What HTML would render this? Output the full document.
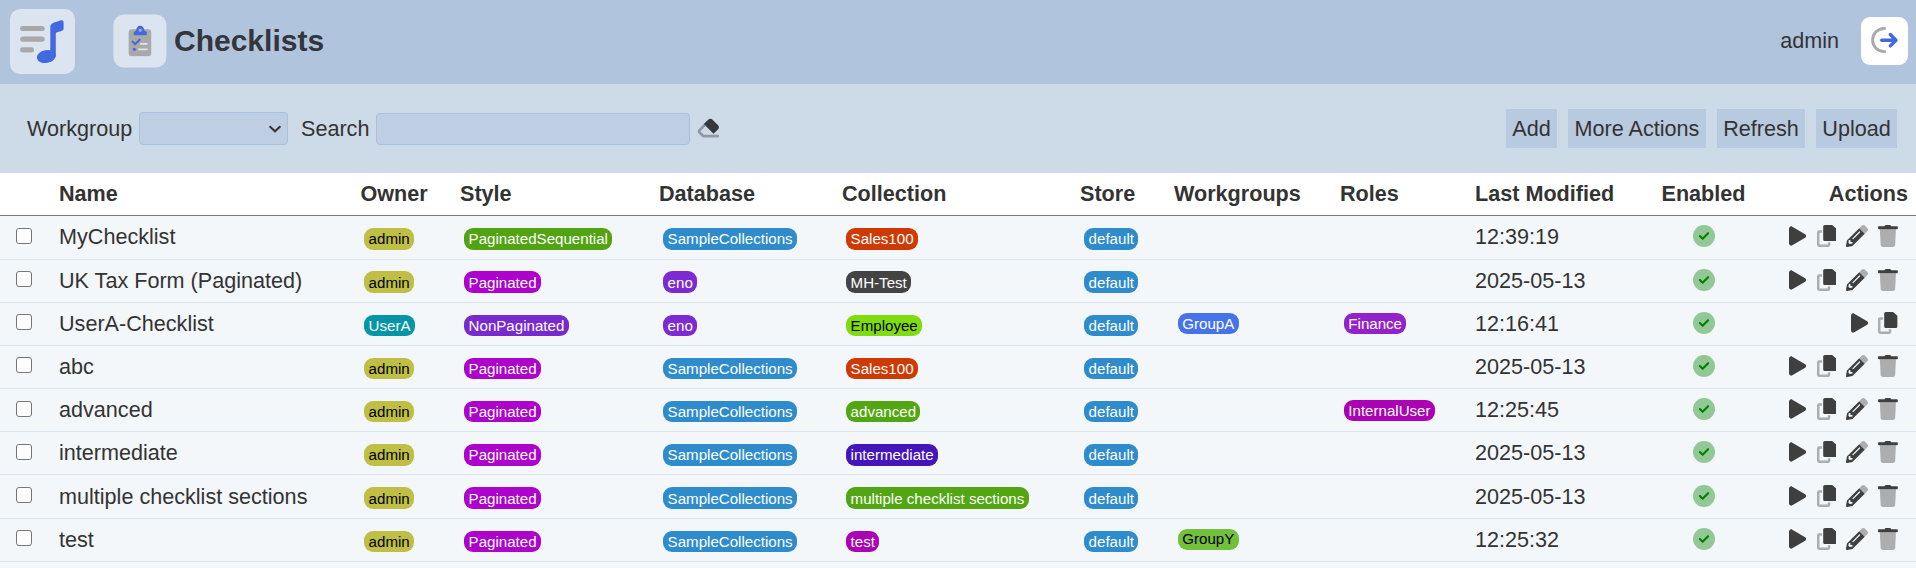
<!DOCTYPE html><html lang="en"><head><meta charset="utf-8"><title>Checklists</title><style>
*{box-sizing:border-box}
html,body{margin:0;padding:0}
body{width:1916px;height:568px;overflow:hidden;background:#f4f7fa;font-family:"Liberation Sans",sans-serif;font-size:21.6px;color:#333;position:relative}
.hdr{position:absolute;left:0;top:0;width:1916px;height:84px;background:#b0c4de}
.logo{position:absolute;left:10px;top:9px;width:65px;height:65px;border-radius:10px;background:#dbe4ef}
.pico{position:absolute;left:113px;top:14px;transform:translate(.4px,.5px);width:53px;height:53px;border-radius:10.500px;background:#dbe4ef}
.pico svg{position:absolute;left:15.400px;top:11.200px}
.title{position:absolute;left:174px;top:0;height:84px;line-height:82px;font-size:30px;font-weight:bold;color:#33363b;white-space:nowrap}
.user{position:absolute;right:77px;top:0;line-height:82px;font-size:21.6px;color:#333;white-space:nowrap}
.out{position:absolute;left:1861px;top:17px;width:47px;height:48px;border-radius:9px;background:#fff}
.out svg{position:absolute;left:0;top:0}
.tb{position:absolute;left:0;top:84px;width:1916px;height:89px;background:#cddae8}
.lbl{position:absolute;top:0;line-height:89px;white-space:nowrap;color:#333}
.sel{position:absolute;left:139px;top:28px;width:149px;height:33px;border:1px solid #a9c0de;border-radius:4px;background:#bfcfe3}
.inp{position:absolute;left:376px;top:29px;width:314px;height:32px;border:1px solid #a9c0de;border-radius:4px;background:#bfcfe3}
.btn{position:absolute;top:25px;height:39px;line-height:39px;background:#b8cae0;color:#333;padding:0;margin:0;border:0;border-radius:0;font:inherit;line-height:39px;text-align:center;white-space:nowrap;display:block;appearance:none;-webkit-appearance:none}
.th{position:absolute;left:0;top:173px;width:1916px;height:43px;background:#fff;border-bottom:1px solid #7a7a7a;font-weight:bold;color:#333}
.th span{position:absolute;top:0;line-height:42px;white-space:nowrap}
.ln{position:absolute;left:0;width:1916px;height:1px;background:#dbe4f0}
.c{position:absolute;line-height:42px;white-space:nowrap}
.cb{position:absolute;left:16px;width:16px;height:16px;border:1.500px solid #767676;border-radius:3px;background:#fff}
.bd{position:absolute;font-size:15.1px;line-height:22px;height:22px;padding:0 4.320px;border-radius:9px;white-space:nowrap}
.ic{height:22px;display:block;position:absolute}
.chk{position:absolute;left:1692.700px}
</style></head><body>
<div class="hdr"><div class="logo"><svg viewBox="0 0 65 65" width="65" height="65" style="display:block">
<g fill="none" stroke="#a9a9a9" stroke-width="5.2" stroke-linecap="round"><path d="M12.700 19.500H32.100M12.700 30.100H32.100M12.700 40.800H21.400"/></g>
<ellipse cx="36.400" cy="47.500" rx="9.600" ry="6.400" fill="#4169e1" transform="rotate(-10 36.400 47.500)"/>
<path fill="#4169e1" d="M40.300 47.500V18.100c0-2 1.300-3.700 3.200-4.300l7.600-2.500c1.300-.4 2.500.5 2.500 1.900v6.400c0 1-.6 1.800-1.500 2.100l-6.300 2.100V47.500z"/></svg></div><div class="pico"><svg viewBox="0 0 384 512" width="23.100" height="30.800" style="display:block">
<path fill="#a9a9a9" d="M56 64C25 64 0 89 0 120V456c0 31 25 56 56 56H328c31 0 56-25 56-56V120c0-31-25-56-56-56H56z"/>
<path fill="#4169e1" fill-rule="evenodd" d="M88 146V122C88 98 112 92 127 82C137 34 162 0 197 0C232 0 257 34 267 82C282 92 306 98 306 122V146A16 16 0 0 1 290 162H104A16 16 0 0 1 88 146ZM197 52a28 28 0 1 1 0 56 28 28 0 1 1 0-56z"/>
<path fill="none" stroke="#4169e1" stroke-width="34" stroke-linecap="round" stroke-linejoin="round" d="M70 268l40 42 78-74"/>
<circle cx="98" cy="396" r="26" fill="#4169e1"/>
<path fill="none" stroke="#dbe4ef" stroke-width="30" stroke-linecap="round" d="M206 306H308M172 396H308"/>
</svg></div><div class="title">Checklists</div><div class="user">admin</div><div class="out"><svg viewBox="0 0 48 48" width="48" height="48" style="display:block">
<path fill="none" stroke="#a9a9a9" stroke-width="2.900" stroke-linecap="round" d="M23.700 34.650h-.5a11.600 11.600 0 0 1 0-23.200h.5"/>
<path fill="none" stroke="#4169e1" stroke-width="3.400" stroke-linecap="round" stroke-linejoin="round" d="M20.700 23.200H34.800M29.300 17.500l5.700 5.700-5.700 5.700"/>
</svg></div></div>
<div class="tb"><span class="lbl" style="left:27px">Workgroup</span><div class="sel"><svg viewBox="-8 -8 16 16" width="16" height="16" style="position:absolute;left:127px;top:7.600px"><path d="M-5.400 -2.700L0 2.300L5.400 -2.700" fill="none" stroke="#333" stroke-width="2" stroke-linecap="butt" stroke-linejoin="miter"/></svg></div><span class="lbl" style="left:301px">Search</span><div class="inp"></div><div style="position:absolute;left:695.900px;top:32.900px"><svg viewBox="0 0 576 512" width="24.600" height="21.870" style="display:block"><path fill="#35383c" opacity=".4" d="M57.400 290.700c-25 25-25 65.500 0 90.500l80 80c12 12 28.300 18.700 45.300 18.700H512c17.700 0 32-14.300 32-32s-14.300-32-32-32H387.900l-90.500 0H182.600l-80-80L227.300 211.300 182 166 57.400 290.700z"/><path fill="#35383c" d="M290.700 57.400c25-25 65.500-25 90.500 0L518.600 194.700c25 25 25 65.500 0 90.500L410 394 182 166 290.700 57.400z"/></svg></div>
<button type="button" class="btn" style="left:1506px;width:51px">Add</button>
<button type="button" class="btn" style="left:1568px;width:138px">More Actions</button>
<button type="button" class="btn" style="left:1717px;width:88px">Refresh</button>
<button type="button" class="btn" style="left:1816px;width:81px">Upload</button>
</div>
<div class="th">
<span style="left:59px">Name</span>
<span style="left:360.5px">Owner</span>
<span style="left:460px">Style</span>
<span style="left:659px">Database</span>
<span style="left:842px">Collection</span>
<span style="left:1080px">Store</span>
<span style="left:1174px">Workgroups</span>
<span style="left:1340px">Roles</span>
<span style="left:1475px">Last Modified</span>
<span style="left:1661.5px">Enabled</span>
<span style="right:8px">Actions</span></div>
<div class="cb" style="top:228px"></div>
<span class="c" style="left:59px;top:216px">MyChecklist</span>
<span class="bd" style="left:364.3px;top:228.20px;height:21.4px;background:#bfbf45;color:#000"><span style="position:relative;top:0px">admin</span></span>
<span class="bd" style="left:464.3px;top:228.20px;height:21.4px;background:#52a312;color:#fff"><span style="position:relative;top:0px">PaginatedSequential</span></span>
<span class="bd" style="left:663.3px;top:228.20px;height:21.4px;background:#2e8ccc;color:#fff"><span style="position:relative;top:0px">SampleCollections</span></span>
<span class="bd" style="left:846.3px;top:228.20px;height:21.4px;background:#cf3a04;color:#fff"><span style="position:relative;top:0px">Sales100</span></span>
<span class="bd" style="left:1084.3px;top:228.20px;height:21.4px;background:#2e8ccc;color:#fff"><span style="position:relative;top:0px">default</span></span>


<span class="c" style="left:1475px;top:216px">12:39:19</span>
<div class="chk" style="top:224.8px"><svg viewBox="0 0 512 512" width="22" height="22" style="display:block"><path fill="#008000" opacity=".4" d="M256 512A256 256 0 1 0 256 0a256 256 0 1 0 0 512z"/><path fill="#008000" d="M369 209L241 337c-9.400 9.400-24.600 9.400-33.900 0l-64-64c-9.400-9.400-9.400-24.600 0-33.900s24.600-9.400 33.900 0l47 47L335 175c9.400-9.400 24.600-9.400 33.900 0s9.400 24.600 0 33.900z"/></svg></div>
<svg class="ic" viewBox="0 0 384 512" preserveAspectRatio="none" style="left:1789.1px;top:224.8px;width:17.2px"><path fill="#3f3f3f" d="M73 39c-14.800-9.100-33.400-9.400-48.500-.9S0 62.600 0 80V432c0 17.400 9.400 33.400 24.500 41.900s33.700 8.100 48.500-.9L361 297c14.300-8.700 23-24.200 23-41s-8.700-32.200-23-41L73 39z"/></svg>
<svg class="ic" viewBox="0 0 451 512" style="left:1816.65px;top:224.8px;width:19.38px"><path fill="#3f3f3f" opacity=".4" fill-rule="evenodd" d="M48 123H262a48 48 0 0 1 48 48V462a48 48 0 0 1-48 48H48a48 48 0 0 1-48-48V171a48 48 0 0 1 48-48zM58 181V452H252V181z"/><path fill="#f4f7fa" stroke="#f4f7fa" stroke-width="50" d="M180 0H353L451 86V339a36 36 0 0 1-36 36H180a36 36 0 0 1-36-36V36a36 36 0 0 1 36-36z"/><path fill="#3f3f3f" d="M180 0H345c5 0 10 2 13.500 5.500L445.500 81c3.500 3.500 5.500 8 5.500 13V339a36 36 0 0 1-36 36H180a36 36 0 0 1-36-36V36a36 36 0 0 1 36-36z"/></svg>
<svg class="ic" viewBox="0 0 512 512" style="left:1846px;top:224.8px;width:22px"><path fill="#3f3f3f" opacity=".4" d="M308 76L369.900 14.100c18.700-18.700 49.100-18.700 67.900 0l60.100 60.100c18.800 18.700 18.800 49.100 0 67.900L436 204z"/><path fill="#3f3f3f" fill-rule="evenodd" d="M308 76L21.600 362.400.4 483.900c-2.900 16.400 11.400 30.600 27.800 27.800l121.500-21.300L436 204zM152 326c-5.500-5.500-5.500-14.300 0-19.800l154-154c5.500-5.500 14.300-5.500 19.800 0s5.500 14.300 0 19.800l-154 154c-5.500 5.500-14.300 5.500-19.800 0zM103 396h48v36.300l-64.500 11.300-31.100-31.100L66.700 348H103v48z"/></svg>
<svg class="ic" viewBox="0 0 448 512" preserveAspectRatio="none" style="left:1878.1px;top:224.8px;width:19.8px"><path fill="#3f3f3f" opacity=".4" d="M406 96H42L60 467c1.600 25.300 22.600 45 47.900 45H340.100c25.300 0 46.300-19.700 47.900-45L406 96z"/><path fill="#3f3f3f" d="M0 49a20 20 0 0 1 20-20H149l5-11c5-10 15-17 27-17h86c12 0 22 7 27 17l5 11H428a20 20 0 0 1 20 20v27a20 20 0 0 1-20 20H20a20 20 0 0 1-20-20z"/></svg>
<div class="cb" style="top:271px"></div>
<span class="c" style="left:59px;top:260px">UK Tax Form (Paginated)</span>
<span class="bd" style="left:364.3px;top:271.40px;height:21.4px;background:#bfbf45;color:#000"><span style="position:relative;top:1px">admin</span></span>
<span class="bd" style="left:464.3px;top:271.40px;height:21.4px;background:#ac02cc;color:#fff"><span style="position:relative;top:1px">Paginated</span></span>
<span class="bd" style="left:663.3px;top:271.40px;height:21.4px;background:#7d2ad2;color:#fff"><span style="position:relative;top:1px">eno</span></span>
<span class="bd" style="left:846.3px;top:271.40px;height:21.4px;background:#444444;color:#fff"><span style="position:relative;top:1px">MH-Test</span></span>
<span class="bd" style="left:1084.3px;top:271.40px;height:21.4px;background:#2e8ccc;color:#fff"><span style="position:relative;top:1px">default</span></span>


<span class="c" style="left:1475px;top:260px">2025-05-13</span>
<div class="chk" style="top:268.8px"><svg viewBox="0 0 512 512" width="22" height="22" style="display:block"><path fill="#008000" opacity=".4" d="M256 512A256 256 0 1 0 256 0a256 256 0 1 0 0 512z"/><path fill="#008000" d="M369 209L241 337c-9.400 9.400-24.600 9.400-33.900 0l-64-64c-9.400-9.400-9.400-24.600 0-33.900s24.600-9.400 33.900 0l47 47L335 175c9.400-9.400 24.600-9.400 33.900 0s9.400 24.600 0 33.900z"/></svg></div>
<svg class="ic" viewBox="0 0 384 512" preserveAspectRatio="none" style="left:1789.1px;top:268.8px;width:17.2px"><path fill="#3f3f3f" d="M73 39c-14.800-9.100-33.400-9.400-48.500-.9S0 62.600 0 80V432c0 17.400 9.400 33.400 24.500 41.900s33.700 8.100 48.500-.9L361 297c14.300-8.700 23-24.200 23-41s-8.700-32.200-23-41L73 39z"/></svg>
<svg class="ic" viewBox="0 0 451 512" style="left:1816.65px;top:268.8px;width:19.38px"><path fill="#3f3f3f" opacity=".4" fill-rule="evenodd" d="M48 123H262a48 48 0 0 1 48 48V462a48 48 0 0 1-48 48H48a48 48 0 0 1-48-48V171a48 48 0 0 1 48-48zM58 181V452H252V181z"/><path fill="#f4f7fa" stroke="#f4f7fa" stroke-width="50" d="M180 0H353L451 86V339a36 36 0 0 1-36 36H180a36 36 0 0 1-36-36V36a36 36 0 0 1 36-36z"/><path fill="#3f3f3f" d="M180 0H345c5 0 10 2 13.500 5.500L445.500 81c3.500 3.500 5.500 8 5.500 13V339a36 36 0 0 1-36 36H180a36 36 0 0 1-36-36V36a36 36 0 0 1 36-36z"/></svg>
<svg class="ic" viewBox="0 0 512 512" style="left:1846px;top:268.8px;width:22px"><path fill="#3f3f3f" opacity=".4" d="M308 76L369.900 14.100c18.700-18.700 49.100-18.700 67.900 0l60.100 60.100c18.800 18.700 18.800 49.100 0 67.900L436 204z"/><path fill="#3f3f3f" fill-rule="evenodd" d="M308 76L21.600 362.400.4 483.900c-2.900 16.400 11.400 30.600 27.800 27.800l121.500-21.300L436 204zM152 326c-5.500-5.500-5.500-14.300 0-19.800l154-154c5.500-5.500 14.300-5.500 19.800 0s5.500 14.300 0 19.800l-154 154c-5.500 5.500-14.300 5.500-19.800 0zM103 396h48v36.300l-64.500 11.300-31.100-31.100L66.700 348H103v48z"/></svg>
<svg class="ic" viewBox="0 0 448 512" preserveAspectRatio="none" style="left:1878.1px;top:268.8px;width:19.8px"><path fill="#3f3f3f" opacity=".4" d="M406 96H42L60 467c1.600 25.300 22.600 45 47.900 45H340.100c25.300 0 46.300-19.700 47.900-45L406 96z"/><path fill="#3f3f3f" d="M0 49a20 20 0 0 1 20-20H149l5-11c5-10 15-17 27-17h86c12 0 22 7 27 17l5 11H428a20 20 0 0 1 20 20v27a20 20 0 0 1-20 20H20a20 20 0 0 1-20-20z"/></svg>
<div class="cb" style="top:314px"></div>
<span class="c" style="left:59px;top:303px">UserA-Checklist</span>
<span class="bd" style="left:364.3px;top:314.60px;height:21.4px;background:#0496a6;color:#fff"><span style="position:relative;top:0px">UserA</span></span>
<span class="bd" style="left:464.3px;top:314.60px;height:21.4px;background:#782ace;color:#fff"><span style="position:relative;top:0px">NonPaginated</span></span>
<span class="bd" style="left:663.3px;top:314.60px;height:21.4px;background:#7d2ad2;color:#fff"><span style="position:relative;top:0px">eno</span></span>
<span class="bd" style="left:846.3px;top:314.60px;height:21.4px;background:#7fdc10;color:#000"><span style="position:relative;top:0px">Employee</span></span>
<span class="bd" style="left:1084.3px;top:314.60px;height:21.4px;background:#2e8ccc;color:#fff"><span style="position:relative;top:0px">default</span></span>
<span class="bd" style="left:1178.0px;top:313.30px;height:21.06px;background:#4672ea;color:#fff"><span style="position:relative;top:0px">GroupA</span></span>
<span class="bd" style="left:1344.0px;top:313.30px;height:21.06px;background:#9422c9;color:#fff"><span style="position:relative;top:0px">Finance</span></span>
<span class="c" style="left:1475px;top:303px">12:16:41</span>
<div class="chk" style="top:311.8px"><svg viewBox="0 0 512 512" width="22" height="22" style="display:block"><path fill="#008000" opacity=".4" d="M256 512A256 256 0 1 0 256 0a256 256 0 1 0 0 512z"/><path fill="#008000" d="M369 209L241 337c-9.400 9.400-24.600 9.400-33.900 0l-64-64c-9.400-9.400-9.400-24.600 0-33.900s24.600-9.400 33.900 0l47 47L335 175c9.400-9.400 24.600-9.400 33.900 0s9.400 24.600 0 33.900z"/></svg></div>
<svg class="ic" viewBox="0 0 384 512" preserveAspectRatio="none" style="left:1850.8px;top:311.8px;width:17.2px"><path fill="#3f3f3f" d="M73 39c-14.800-9.100-33.400-9.400-48.500-.9S0 62.600 0 80V432c0 17.400 9.400 33.400 24.500 41.900s33.700 8.100 48.500-.9L361 297c14.300-8.700 23-24.200 23-41s-8.700-32.200-23-41L73 39z"/></svg>
<svg class="ic" viewBox="0 0 451 512" style="left:1878.3px;top:311.8px;width:19.38px"><path fill="#3f3f3f" opacity=".4" fill-rule="evenodd" d="M48 123H262a48 48 0 0 1 48 48V462a48 48 0 0 1-48 48H48a48 48 0 0 1-48-48V171a48 48 0 0 1 48-48zM58 181V452H252V181z"/><path fill="#f4f7fa" stroke="#f4f7fa" stroke-width="50" d="M180 0H353L451 86V339a36 36 0 0 1-36 36H180a36 36 0 0 1-36-36V36a36 36 0 0 1 36-36z"/><path fill="#3f3f3f" d="M180 0H345c5 0 10 2 13.500 5.500L445.500 81c3.500 3.500 5.500 8 5.500 13V339a36 36 0 0 1-36 36H180a36 36 0 0 1-36-36V36a36 36 0 0 1 36-36z"/></svg>
<div class="cb" style="top:357px"></div>
<span class="c" style="left:59px;top:346px">abc</span>
<span class="bd" style="left:364.3px;top:357.80px;height:21.4px;background:#bfbf45;color:#000"><span style="position:relative;top:0px">admin</span></span>
<span class="bd" style="left:464.3px;top:357.80px;height:21.4px;background:#ac02cc;color:#fff"><span style="position:relative;top:0px">Paginated</span></span>
<span class="bd" style="left:663.3px;top:357.80px;height:21.4px;background:#2e8ccc;color:#fff"><span style="position:relative;top:0px">SampleCollections</span></span>
<span class="bd" style="left:846.3px;top:357.80px;height:21.4px;background:#cf3a04;color:#fff"><span style="position:relative;top:0px">Sales100</span></span>
<span class="bd" style="left:1084.3px;top:357.80px;height:21.4px;background:#2e8ccc;color:#fff"><span style="position:relative;top:0px">default</span></span>


<span class="c" style="left:1475px;top:346px">2025-05-13</span>
<div class="chk" style="top:354.8px"><svg viewBox="0 0 512 512" width="22" height="22" style="display:block"><path fill="#008000" opacity=".4" d="M256 512A256 256 0 1 0 256 0a256 256 0 1 0 0 512z"/><path fill="#008000" d="M369 209L241 337c-9.400 9.400-24.600 9.400-33.900 0l-64-64c-9.400-9.400-9.400-24.600 0-33.900s24.600-9.400 33.900 0l47 47L335 175c9.400-9.400 24.600-9.400 33.900 0s9.400 24.600 0 33.900z"/></svg></div>
<svg class="ic" viewBox="0 0 384 512" preserveAspectRatio="none" style="left:1789.1px;top:354.8px;width:17.2px"><path fill="#3f3f3f" d="M73 39c-14.800-9.100-33.400-9.400-48.500-.9S0 62.600 0 80V432c0 17.400 9.400 33.400 24.500 41.900s33.700 8.100 48.500-.9L361 297c14.300-8.700 23-24.200 23-41s-8.700-32.200-23-41L73 39z"/></svg>
<svg class="ic" viewBox="0 0 451 512" style="left:1816.65px;top:354.8px;width:19.38px"><path fill="#3f3f3f" opacity=".4" fill-rule="evenodd" d="M48 123H262a48 48 0 0 1 48 48V462a48 48 0 0 1-48 48H48a48 48 0 0 1-48-48V171a48 48 0 0 1 48-48zM58 181V452H252V181z"/><path fill="#f4f7fa" stroke="#f4f7fa" stroke-width="50" d="M180 0H353L451 86V339a36 36 0 0 1-36 36H180a36 36 0 0 1-36-36V36a36 36 0 0 1 36-36z"/><path fill="#3f3f3f" d="M180 0H345c5 0 10 2 13.500 5.500L445.500 81c3.500 3.500 5.500 8 5.500 13V339a36 36 0 0 1-36 36H180a36 36 0 0 1-36-36V36a36 36 0 0 1 36-36z"/></svg>
<svg class="ic" viewBox="0 0 512 512" style="left:1846px;top:354.8px;width:22px"><path fill="#3f3f3f" opacity=".4" d="M308 76L369.900 14.100c18.700-18.700 49.100-18.700 67.900 0l60.100 60.100c18.800 18.700 18.800 49.100 0 67.900L436 204z"/><path fill="#3f3f3f" fill-rule="evenodd" d="M308 76L21.600 362.400.4 483.900c-2.900 16.400 11.400 30.600 27.800 27.800l121.500-21.300L436 204zM152 326c-5.500-5.500-5.500-14.300 0-19.800l154-154c5.500-5.500 14.300-5.500 19.800 0s5.500 14.300 0 19.800l-154 154c-5.500 5.500-14.300 5.500-19.800 0zM103 396h48v36.300l-64.500 11.300-31.100-31.100L66.700 348H103v48z"/></svg>
<svg class="ic" viewBox="0 0 448 512" preserveAspectRatio="none" style="left:1878.1px;top:354.8px;width:19.8px"><path fill="#3f3f3f" opacity=".4" d="M406 96H42L60 467c1.600 25.300 22.600 45 47.900 45H340.100c25.300 0 46.300-19.700 47.900-45L406 96z"/><path fill="#3f3f3f" d="M0 49a20 20 0 0 1 20-20H149l5-11c5-10 15-17 27-17h86c12 0 22 7 27 17l5 11H428a20 20 0 0 1 20 20v27a20 20 0 0 1-20 20H20a20 20 0 0 1-20-20z"/></svg>
<div class="cb" style="top:401px"></div>
<span class="c" style="left:59px;top:389px">advanced</span>
<span class="bd" style="left:364.3px;top:401.00px;height:21.4px;background:#bfbf45;color:#000"><span style="position:relative;top:0px">admin</span></span>
<span class="bd" style="left:464.3px;top:401.00px;height:21.4px;background:#ac02cc;color:#fff"><span style="position:relative;top:0px">Paginated</span></span>
<span class="bd" style="left:663.3px;top:401.00px;height:21.4px;background:#2e8ccc;color:#fff"><span style="position:relative;top:0px">SampleCollections</span></span>
<span class="bd" style="left:846.3px;top:401.00px;height:21.4px;background:#52a612;color:#fff"><span style="position:relative;top:0px">advanced</span></span>
<span class="bd" style="left:1084.3px;top:401.00px;height:21.4px;background:#2e8ccc;color:#fff"><span style="position:relative;top:0px">default</span></span>

<span class="bd" style="left:1344.0px;top:399.70px;height:21.06px;background:#ab02b3;color:#fff"><span style="position:relative;top:0px">InternalUser</span></span>
<span class="c" style="left:1475px;top:389px">12:25:45</span>
<div class="chk" style="top:397.8px"><svg viewBox="0 0 512 512" width="22" height="22" style="display:block"><path fill="#008000" opacity=".4" d="M256 512A256 256 0 1 0 256 0a256 256 0 1 0 0 512z"/><path fill="#008000" d="M369 209L241 337c-9.400 9.400-24.600 9.400-33.900 0l-64-64c-9.400-9.400-9.400-24.600 0-33.900s24.600-9.400 33.900 0l47 47L335 175c9.400-9.400 24.600-9.400 33.900 0s9.400 24.600 0 33.900z"/></svg></div>
<svg class="ic" viewBox="0 0 384 512" preserveAspectRatio="none" style="left:1789.1px;top:397.8px;width:17.2px"><path fill="#3f3f3f" d="M73 39c-14.800-9.100-33.400-9.400-48.500-.9S0 62.600 0 80V432c0 17.400 9.400 33.400 24.500 41.900s33.700 8.100 48.500-.9L361 297c14.300-8.700 23-24.200 23-41s-8.700-32.200-23-41L73 39z"/></svg>
<svg class="ic" viewBox="0 0 451 512" style="left:1816.65px;top:397.8px;width:19.38px"><path fill="#3f3f3f" opacity=".4" fill-rule="evenodd" d="M48 123H262a48 48 0 0 1 48 48V462a48 48 0 0 1-48 48H48a48 48 0 0 1-48-48V171a48 48 0 0 1 48-48zM58 181V452H252V181z"/><path fill="#f4f7fa" stroke="#f4f7fa" stroke-width="50" d="M180 0H353L451 86V339a36 36 0 0 1-36 36H180a36 36 0 0 1-36-36V36a36 36 0 0 1 36-36z"/><path fill="#3f3f3f" d="M180 0H345c5 0 10 2 13.500 5.500L445.500 81c3.500 3.500 5.500 8 5.500 13V339a36 36 0 0 1-36 36H180a36 36 0 0 1-36-36V36a36 36 0 0 1 36-36z"/></svg>
<svg class="ic" viewBox="0 0 512 512" style="left:1846px;top:397.8px;width:22px"><path fill="#3f3f3f" opacity=".4" d="M308 76L369.900 14.100c18.700-18.700 49.100-18.700 67.900 0l60.100 60.100c18.800 18.700 18.800 49.100 0 67.900L436 204z"/><path fill="#3f3f3f" fill-rule="evenodd" d="M308 76L21.600 362.400.4 483.900c-2.900 16.400 11.400 30.600 27.800 27.800l121.500-21.300L436 204zM152 326c-5.500-5.500-5.500-14.300 0-19.800l154-154c5.500-5.500 14.300-5.500 19.800 0s5.500 14.300 0 19.800l-154 154c-5.500 5.500-14.300 5.500-19.800 0zM103 396h48v36.300l-64.500 11.300-31.100-31.100L66.700 348H103v48z"/></svg>
<svg class="ic" viewBox="0 0 448 512" preserveAspectRatio="none" style="left:1878.1px;top:397.8px;width:19.8px"><path fill="#3f3f3f" opacity=".4" d="M406 96H42L60 467c1.600 25.300 22.600 45 47.900 45H340.100c25.300 0 46.300-19.700 47.900-45L406 96z"/><path fill="#3f3f3f" d="M0 49a20 20 0 0 1 20-20H149l5-11c5-10 15-17 27-17h86c12 0 22 7 27 17l5 11H428a20 20 0 0 1 20 20v27a20 20 0 0 1-20 20H20a20 20 0 0 1-20-20z"/></svg>
<div class="cb" style="top:444px"></div>
<span class="c" style="left:59px;top:432px">intermediate</span>
<span class="bd" style="left:364.3px;top:444.20px;height:21.4px;background:#bfbf45;color:#000"><span style="position:relative;top:0px">admin</span></span>
<span class="bd" style="left:464.3px;top:444.20px;height:21.4px;background:#ac02cc;color:#fff"><span style="position:relative;top:0px">Paginated</span></span>
<span class="bd" style="left:663.3px;top:444.20px;height:21.4px;background:#2e8ccc;color:#fff"><span style="position:relative;top:0px">SampleCollections</span></span>
<span class="bd" style="left:846.3px;top:444.20px;height:21.4px;background:#4416ba;color:#fff"><span style="position:relative;top:0px">intermediate</span></span>
<span class="bd" style="left:1084.3px;top:444.20px;height:21.4px;background:#2e8ccc;color:#fff"><span style="position:relative;top:0px">default</span></span>


<span class="c" style="left:1475px;top:432px">2025-05-13</span>
<div class="chk" style="top:440.8px"><svg viewBox="0 0 512 512" width="22" height="22" style="display:block"><path fill="#008000" opacity=".4" d="M256 512A256 256 0 1 0 256 0a256 256 0 1 0 0 512z"/><path fill="#008000" d="M369 209L241 337c-9.400 9.400-24.600 9.400-33.900 0l-64-64c-9.400-9.400-9.400-24.600 0-33.900s24.600-9.400 33.900 0l47 47L335 175c9.400-9.400 24.600-9.400 33.900 0s9.400 24.600 0 33.900z"/></svg></div>
<svg class="ic" viewBox="0 0 384 512" preserveAspectRatio="none" style="left:1789.1px;top:440.8px;width:17.2px"><path fill="#3f3f3f" d="M73 39c-14.800-9.100-33.400-9.400-48.500-.9S0 62.600 0 80V432c0 17.400 9.400 33.400 24.500 41.900s33.700 8.100 48.500-.9L361 297c14.300-8.700 23-24.200 23-41s-8.700-32.200-23-41L73 39z"/></svg>
<svg class="ic" viewBox="0 0 451 512" style="left:1816.65px;top:440.8px;width:19.38px"><path fill="#3f3f3f" opacity=".4" fill-rule="evenodd" d="M48 123H262a48 48 0 0 1 48 48V462a48 48 0 0 1-48 48H48a48 48 0 0 1-48-48V171a48 48 0 0 1 48-48zM58 181V452H252V181z"/><path fill="#f4f7fa" stroke="#f4f7fa" stroke-width="50" d="M180 0H353L451 86V339a36 36 0 0 1-36 36H180a36 36 0 0 1-36-36V36a36 36 0 0 1 36-36z"/><path fill="#3f3f3f" d="M180 0H345c5 0 10 2 13.500 5.500L445.500 81c3.500 3.500 5.500 8 5.500 13V339a36 36 0 0 1-36 36H180a36 36 0 0 1-36-36V36a36 36 0 0 1 36-36z"/></svg>
<svg class="ic" viewBox="0 0 512 512" style="left:1846px;top:440.8px;width:22px"><path fill="#3f3f3f" opacity=".4" d="M308 76L369.900 14.100c18.700-18.700 49.100-18.700 67.900 0l60.100 60.100c18.800 18.700 18.800 49.100 0 67.900L436 204z"/><path fill="#3f3f3f" fill-rule="evenodd" d="M308 76L21.600 362.400.4 483.900c-2.900 16.400 11.400 30.600 27.800 27.800l121.500-21.300L436 204zM152 326c-5.500-5.500-5.500-14.300 0-19.800l154-154c5.500-5.500 14.300-5.500 19.800 0s5.500 14.300 0 19.800l-154 154c-5.500 5.500-14.300 5.500-19.800 0zM103 396h48v36.300l-64.500 11.300-31.100-31.100L66.700 348H103v48z"/></svg>
<svg class="ic" viewBox="0 0 448 512" preserveAspectRatio="none" style="left:1878.1px;top:440.8px;width:19.8px"><path fill="#3f3f3f" opacity=".4" d="M406 96H42L60 467c1.600 25.300 22.600 45 47.900 45H340.100c25.300 0 46.300-19.700 47.900-45L406 96z"/><path fill="#3f3f3f" d="M0 49a20 20 0 0 1 20-20H149l5-11c5-10 15-17 27-17h86c12 0 22 7 27 17l5 11H428a20 20 0 0 1 20 20v27a20 20 0 0 1-20 20H20a20 20 0 0 1-20-20z"/></svg>
<div class="cb" style="top:487px"></div>
<span class="c" style="left:59px;top:476px">multiple checklist sections</span>
<span class="bd" style="left:364.3px;top:487.40px;height:21.4px;background:#bfbf45;color:#000"><span style="position:relative;top:1px">admin</span></span>
<span class="bd" style="left:464.3px;top:487.40px;height:21.4px;background:#ac02cc;color:#fff"><span style="position:relative;top:1px">Paginated</span></span>
<span class="bd" style="left:663.3px;top:487.40px;height:21.4px;background:#2e8ccc;color:#fff"><span style="position:relative;top:1px">SampleCollections</span></span>
<span class="bd" style="left:846.3px;top:487.40px;height:21.4px;background:#52a612;color:#fff"><span style="position:relative;top:1px">multiple checklist sections</span></span>
<span class="bd" style="left:1084.3px;top:487.40px;height:21.4px;background:#2e8ccc;color:#fff"><span style="position:relative;top:1px">default</span></span>


<span class="c" style="left:1475px;top:476px">2025-05-13</span>
<div class="chk" style="top:484.8px"><svg viewBox="0 0 512 512" width="22" height="22" style="display:block"><path fill="#008000" opacity=".4" d="M256 512A256 256 0 1 0 256 0a256 256 0 1 0 0 512z"/><path fill="#008000" d="M369 209L241 337c-9.400 9.400-24.600 9.400-33.900 0l-64-64c-9.400-9.400-9.400-24.600 0-33.900s24.600-9.400 33.900 0l47 47L335 175c9.400-9.400 24.600-9.400 33.900 0s9.400 24.600 0 33.900z"/></svg></div>
<svg class="ic" viewBox="0 0 384 512" preserveAspectRatio="none" style="left:1789.1px;top:484.8px;width:17.2px"><path fill="#3f3f3f" d="M73 39c-14.800-9.100-33.400-9.400-48.500-.9S0 62.600 0 80V432c0 17.400 9.400 33.400 24.500 41.900s33.700 8.100 48.500-.9L361 297c14.300-8.700 23-24.200 23-41s-8.700-32.200-23-41L73 39z"/></svg>
<svg class="ic" viewBox="0 0 451 512" style="left:1816.65px;top:484.8px;width:19.38px"><path fill="#3f3f3f" opacity=".4" fill-rule="evenodd" d="M48 123H262a48 48 0 0 1 48 48V462a48 48 0 0 1-48 48H48a48 48 0 0 1-48-48V171a48 48 0 0 1 48-48zM58 181V452H252V181z"/><path fill="#f4f7fa" stroke="#f4f7fa" stroke-width="50" d="M180 0H353L451 86V339a36 36 0 0 1-36 36H180a36 36 0 0 1-36-36V36a36 36 0 0 1 36-36z"/><path fill="#3f3f3f" d="M180 0H345c5 0 10 2 13.500 5.500L445.500 81c3.500 3.500 5.500 8 5.500 13V339a36 36 0 0 1-36 36H180a36 36 0 0 1-36-36V36a36 36 0 0 1 36-36z"/></svg>
<svg class="ic" viewBox="0 0 512 512" style="left:1846px;top:484.8px;width:22px"><path fill="#3f3f3f" opacity=".4" d="M308 76L369.900 14.100c18.700-18.700 49.100-18.700 67.900 0l60.100 60.100c18.800 18.700 18.800 49.100 0 67.900L436 204z"/><path fill="#3f3f3f" fill-rule="evenodd" d="M308 76L21.600 362.400.4 483.900c-2.900 16.400 11.400 30.600 27.800 27.800l121.500-21.300L436 204zM152 326c-5.500-5.500-5.500-14.300 0-19.800l154-154c5.500-5.500 14.300-5.500 19.800 0s5.500 14.300 0 19.800l-154 154c-5.500 5.500-14.300 5.500-19.800 0zM103 396h48v36.300l-64.500 11.300-31.100-31.100L66.700 348H103v48z"/></svg>
<svg class="ic" viewBox="0 0 448 512" preserveAspectRatio="none" style="left:1878.1px;top:484.8px;width:19.8px"><path fill="#3f3f3f" opacity=".4" d="M406 96H42L60 467c1.600 25.300 22.600 45 47.900 45H340.100c25.300 0 46.300-19.700 47.900-45L406 96z"/><path fill="#3f3f3f" d="M0 49a20 20 0 0 1 20-20H149l5-11c5-10 15-17 27-17h86c12 0 22 7 27 17l5 11H428a20 20 0 0 1 20 20v27a20 20 0 0 1-20 20H20a20 20 0 0 1-20-20z"/></svg>
<div class="cb" style="top:530px"></div>
<span class="c" style="left:59px;top:519px">test</span>
<span class="bd" style="left:364.3px;top:530.60px;height:21.4px;background:#bfbf45;color:#000"><span style="position:relative;top:0px">admin</span></span>
<span class="bd" style="left:464.3px;top:530.60px;height:21.4px;background:#ac02cc;color:#fff"><span style="position:relative;top:0px">Paginated</span></span>
<span class="bd" style="left:663.3px;top:530.60px;height:21.4px;background:#2e8ccc;color:#fff"><span style="position:relative;top:0px">SampleCollections</span></span>
<span class="bd" style="left:846.3px;top:530.60px;height:21.4px;background:#ab02b3;color:#fff"><span style="position:relative;top:0px">test</span></span>
<span class="bd" style="left:1084.3px;top:530.60px;height:21.4px;background:#2e8ccc;color:#fff"><span style="position:relative;top:0px">default</span></span>
<span class="bd" style="left:1178.0px;top:529.30px;height:21.06px;background:#73c03c;color:#000"><span style="position:relative;top:-1px">GroupY</span></span>

<span class="c" style="left:1475px;top:519px">12:25:32</span>
<div class="chk" style="top:527.8px"><svg viewBox="0 0 512 512" width="22" height="22" style="display:block"><path fill="#008000" opacity=".4" d="M256 512A256 256 0 1 0 256 0a256 256 0 1 0 0 512z"/><path fill="#008000" d="M369 209L241 337c-9.400 9.400-24.600 9.400-33.900 0l-64-64c-9.400-9.400-9.400-24.600 0-33.900s24.600-9.400 33.900 0l47 47L335 175c9.400-9.400 24.600-9.400 33.900 0s9.400 24.600 0 33.900z"/></svg></div>
<svg class="ic" viewBox="0 0 384 512" preserveAspectRatio="none" style="left:1789.1px;top:527.8px;width:17.2px"><path fill="#3f3f3f" d="M73 39c-14.800-9.100-33.400-9.400-48.500-.9S0 62.600 0 80V432c0 17.400 9.400 33.400 24.500 41.900s33.700 8.100 48.500-.9L361 297c14.300-8.700 23-24.200 23-41s-8.700-32.200-23-41L73 39z"/></svg>
<svg class="ic" viewBox="0 0 451 512" style="left:1816.65px;top:527.8px;width:19.38px"><path fill="#3f3f3f" opacity=".4" fill-rule="evenodd" d="M48 123H262a48 48 0 0 1 48 48V462a48 48 0 0 1-48 48H48a48 48 0 0 1-48-48V171a48 48 0 0 1 48-48zM58 181V452H252V181z"/><path fill="#f4f7fa" stroke="#f4f7fa" stroke-width="50" d="M180 0H353L451 86V339a36 36 0 0 1-36 36H180a36 36 0 0 1-36-36V36a36 36 0 0 1 36-36z"/><path fill="#3f3f3f" d="M180 0H345c5 0 10 2 13.500 5.500L445.500 81c3.500 3.500 5.500 8 5.500 13V339a36 36 0 0 1-36 36H180a36 36 0 0 1-36-36V36a36 36 0 0 1 36-36z"/></svg>
<svg class="ic" viewBox="0 0 512 512" style="left:1846px;top:527.8px;width:22px"><path fill="#3f3f3f" opacity=".4" d="M308 76L369.900 14.100c18.700-18.700 49.100-18.700 67.900 0l60.100 60.100c18.800 18.700 18.800 49.100 0 67.900L436 204z"/><path fill="#3f3f3f" fill-rule="evenodd" d="M308 76L21.600 362.400.4 483.900c-2.900 16.400 11.400 30.600 27.800 27.800l121.500-21.300L436 204zM152 326c-5.500-5.500-5.500-14.300 0-19.800l154-154c5.500-5.500 14.300-5.500 19.800 0s5.500 14.300 0 19.800l-154 154c-5.500 5.500-14.300 5.500-19.800 0zM103 396h48v36.300l-64.500 11.300-31.100-31.100L66.700 348H103v48z"/></svg>
<svg class="ic" viewBox="0 0 448 512" preserveAspectRatio="none" style="left:1878.1px;top:527.8px;width:19.8px"><path fill="#3f3f3f" opacity=".4" d="M406 96H42L60 467c1.600 25.300 22.600 45 47.900 45H340.100c25.300 0 46.300-19.700 47.900-45L406 96z"/><path fill="#3f3f3f" d="M0 49a20 20 0 0 1 20-20H149l5-11c5-10 15-17 27-17h86c12 0 22 7 27 17l5 11H428a20 20 0 0 1 20 20v27a20 20 0 0 1-20 20H20a20 20 0 0 1-20-20z"/></svg>
<div class="ln" style="top:259px"></div>
<div class="ln" style="top:302px"></div>
<div class="ln" style="top:345px"></div>
<div class="ln" style="top:388px"></div>
<div class="ln" style="top:431px"></div>
<div class="ln" style="top:474px"></div>
<div class="ln" style="top:518px"></div>
<div class="ln" style="top:561px"></div>
</body></html>
